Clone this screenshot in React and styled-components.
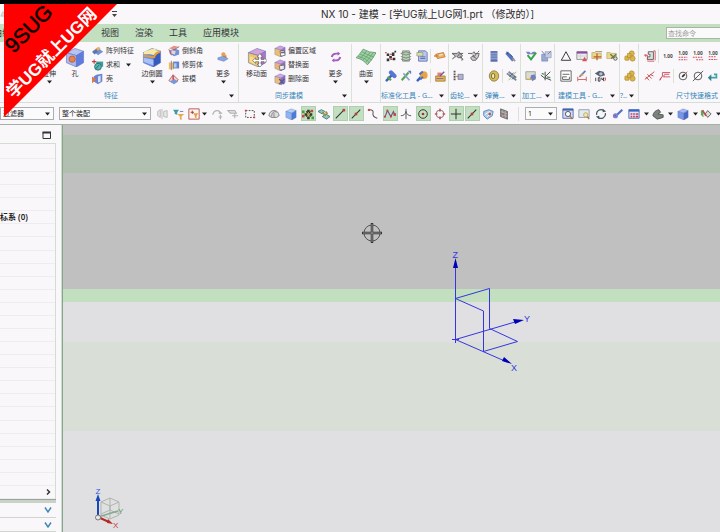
import React from "react";
import styled, { createGlobalStyle } from "styled-components";

const GlobalStyle = createGlobalStyle`
  * { box-sizing: border-box; }
  body { margin: 0; overflow: hidden; }
  button, input, select {
    margin: 0; padding: 0; border: 0; border-radius: 0; background: none;
    font: inherit; color: inherit; letter-spacing: normal;
  }
`;

/* ---------- layout ---------- */

const Window = styled.div`
  position: relative;
  display: flex;
  flex-direction: column;
  height: 100vh;
  overflow: hidden;
  background: #f9f7fa;
  color: #333436;
  font: 7px/12px "Noto Sans", "Noto Sans CJK SC", sans-serif;
  white-space: nowrap;
`;

const TitleBar = styled.header`
  display: flex;
  align-items: center;
  flex: none;
  height: 24px;
  border-top: 4px solid #000;
`;

const QuickAccess = styled.div`
  display: flex;
  align-items: center;
  justify-content: space-between;
  flex: none;
  width: 118px;
`;

const Title = styled.h1`
  flex: 1;
  margin: 0;
  padding-left: 203px;
  font-family: Inter, "Noto Sans CJK SC", sans-serif;
  font-size: 10px;
  line-height: 20px;
  font-weight: 400;
  color: #2b2b2b;
`;

const MenuBar = styled.nav`
  display: flex;
  align-items: center;
  gap: 16px;
  flex: none;
  height: 18px;
  background: #c2dfc0;
  font-size: 9px;
  line-height: 18px;
  overflow: hidden;
`;

const MenuTab = styled.button`
  flex: none;
  &:first-child { margin: 0 74px 0 -7px; }
`;

const Search = styled.input`
  width: 54px;
  height: 12px;
  margin-left: auto;
  padding-left: 1px;
  flex: none;
  border: 1px solid #a9b5a9;
  border-right: 0;
  background: #fafafa;
  font-size: 7px;
  line-height: 10px;
  &::placeholder { color: #9a9a9a; opacity: 1; }
`;

const Ribbon = styled.div`
  display: flex;
  flex: none;
  height: 61px;
  border-bottom: 1px solid #d5ddd5;
  overflow: hidden;
`;

const Group = styled.section`
  display: flex;
  flex-direction: column;
  flex: ${(p) => (p.$w ? "none" : "1")};
  width: ${(p) => (p.$w ? p.$w + "px" : "auto")};
  margin-top: 2px;
  border-right: 1px solid ${(p) => (p.$w ? "#d6e3d6" : "transparent")};
  overflow: hidden;
`;

const GroupBody = styled.div`
  display: flex;
  flex: 1;
  padding-left: ${(p) => p.$indent || 0}px;
`;

const GroupLabel = styled.h2`
  display: flex;
  align-items: center;
  justify-content: space-between;
  height: 12px;
  margin: 0;
  padding: 0 4px 0 ${(p) => p.$indent || 0}px;
  font-size: 7px;
  font-weight: 400;
  color: #3486b8;
`;

const BigButton = styled.button`
  display: flex;
  flex-direction: column;
  align-items: center;
  flex: none;
  width: ${(p) => p.$w}px;
  padding-top: 2px;
`;

const BigIcon = styled.span`
  display: grid;
  place-items: center;
  height: 22px;
`;

const List = styled.div`
  display: flex;
  flex-direction: column;
  flex: none;
  width: ${(p) => p.$w}px;
  padding-left: ${(p) => p.$indent || 0}px;
`;

const ListButton = styled.button`
  display: flex;
  align-items: center;
  gap: 2px;
  height: 14px;
  & > svg:last-child:not(:first-child) { margin-left: 4px; }
`;

const Rows = styled.div`
  display: flex;
  flex-direction: column;
  padding-top: 2px;
`;

const IconRow = styled.div`
  display: flex;
  align-items: center;
  height: 20px;
`;

const Tool = styled.button`
  display: grid;
  place-items: center;
  flex: none;
  width: ${(p) => p.$w || 15}px;
  height: 14px;
`;

const Rule = styled.span`
  flex: none;
  width: 1px;
  height: 14px;
  margin: 0 ${(p) => p.$gap || 1}px;
  background: #d9e1d9;
`;

const SelectionBar = styled.div`
  display: flex;
  align-items: center;
  flex: none;
  height: 22px;
  border-bottom: 1px solid #a4b2a6;
  overflow: hidden;
`;

const ComboFrame = styled.label`
  display: flex;
  align-items: center;
  flex: none;
  width: ${(p) => p.$w}px;
  height: 13px;
  margin-right: ${(p) => p.$gap || 3}px;
  padding-right: 3px;
  border: 1px solid #a9aeb0;
  background: #fcfbfc;
`;

const Combo = styled.select`
  appearance: none;
  flex: 1;
  min-width: 0;
  height: 11px;
  padding-left: 2px;
  line-height: 11px;
  color: #222;
`;

const Cell = styled.button`
  display: grid;
  place-items: center;
  flex: none;
  width: ${(p) => p.$w}px;
  height: 15px;
`;

const Pressed = styled.span`
  display: grid;
  place-items: center;
  width: 15px;
  height: 15px;
  border: 1px solid #b0ceb2;
  background: #c2dfc0;
`;

const Workspace = styled.main`
  display: flex;
  flex: 1;
  min-height: 0;
`;

const Navigator = styled.aside`
  display: flex;
  flex-direction: column;
  flex: none;
  width: 63px;
  border-right: 1px solid #87a58b;
  box-shadow: inset -1px 0 #cddccf;
`;

const NavHeader = styled.div`
  display: flex;
  align-items: center;
  justify-content: flex-end;
  height: 18px;
  padding: 2px 10px 0 0;
`;

const Tree = styled.ul`
  display: flex;
  flex-direction: column;
  flex: 1;
  width: 56px;
  margin: 0;
  padding: 0;
  list-style: none;
  border: solid #d3ded3;
  border-width: 1px 1px 0 0;
`;

const TreeRow = styled.li`
  display: flex;
  align-items: center;
  justify-content: ${(p) => (p.$end ? "flex-end" : "flex-start")};
  flex: 1;
  min-height: 0;
  padding-right: 3px;
  border-bottom: 1px solid #eeecf0;
  font-weight: 600;
  font-size: 8px;
  color: #222;
  &:first-child { flex: 0 0 15px; }
`;

const Splitter = styled.div`
  width: 56px;
  height: 4px;
  border-top: 1px solid #98a598;
  background: #c8d2c8;
`;

const Section = styled.button`
  display: flex;
  align-items: center;
  justify-content: flex-end;
  width: 56px;
  height: ${(p) => p.$h}px;
  padding-right: 4px;
  border-bottom: 1px solid #cfd6d0;
`;

const Viewport = styled.section`
  position: relative;
  flex: 1;
  background: linear-gradient(
    #c0c0c0 10px, #b0bfb0 10px 48px, #c0c0c0 48px 164px, #c2dfc0 164px 177px,
    #e0e0e2 177px 217px, #d9dfd7 217px 306px, #e0e0e2 306px
  );
`;

const Cursor = styled.svg`
  position: absolute;
  left: 298px;
  top: 97px;
`;

const Datum = styled.svg`
  position: absolute;
  left: 382px;
  top: 122px;
`;

const Triad = styled.svg`
  position: absolute;
  left: 27px;
  bottom: 0;
`;

const Ribbon45 = styled.svg`
  position: absolute;
  left: 4px;
  top: 4px;
  pointer-events: none;
`;

/* ---------- icons ---------- */

const cube = (top, left, right) => (
  <g stroke="#5a6fb5" strokeWidth=".4">
    <path d="M1 4 7 1l6 2-5 3z" fill={top} />
    <path d="M1 4l7 2v8l-7-3z" fill={left} />
    <path d="M8 6l5-3v8l-5 3z" fill={right} />
  </g>
);

const dims = (a) => (
  <>
    <text x="7" y="6" fontSize="5.5" fontWeight="700" textAnchor="middle" fill="#444">1.00</text>
    {a && <path d={a} stroke="#d04a5c" fill="none" strokeWidth="1.2" strokeDasharray="2 1" />}
  </>
);

const wrench = (x) => (
  <path d={x || "M2 12 8 6M7 3l4 4"} stroke="#3c62c4" strokeWidth="3" strokeLinecap="round" fill="none" />
);

const folder = <path d="M1 3h4l1 1h6v6H1z" fill="#e9d88a" stroke="#a59443" strokeWidth=".6" />;

const art = {
  hole: <>{cube("#b7c3f3", "#aab8f2", "#5f7be0")}<circle cx="5" cy="8.5" r="2.2" fill="#e58352" stroke="#c4592d" strokeWidth=".6" /></>,
  fillet: (
    <>
      {cube("#f5e7a4", "#6c8fe6", "#345bbd")}
      <path d="M1 5Q1 3 4 2.5l7-1.7Q8 2 8 5z" fill="#f7e8a5" />
      <path d="M1 5.500 8 6.500q.5-3 5-3.800v1.200q-3.500 1-4 4L1 6.800z" fill="#e59a3c" />
      <path d="M1.200 7.500 8 9v4l-6.800-2.600z" fill="#a9c2f5" />
    </>
  ),
  moveFace: (
    <>
      {cube("#d7a2dc", "#f0c56b", "#b274c2")}
      <path d="M2 6.500 6 8v4.500L2 10.500z" fill="#f9dd85" />
      <path d="M9 4.500 11 7h-1.200v1.700H12V7.500l2 2-2 2v-1.200H9.800V12H11l-2 2-2-2h1.200v-1.700H6v1.200l-2-2 2-2v1.200h2.200V7H7z" fill="#fff" stroke="#666" strokeWidth=".5" />
    </>
  ),
  surface: (
    <g stroke="#4f8c5b" strokeWidth=".5" fill="none">
      <path d="M0 7.500Q2 6 5 1.500q4 2.500 9 2.500-2 4-6 8.500Q5 8.500 0 7.500z" fill="#9fcfa5" />
      <path d="M1.500 6.500q5 1 8 4.500M2.700 5q5 1.500 8.500 4.300M4 3.300q4 2.200 8.500 3.700M2.500 8Q5 6.500 7.500 2.700M4.800 9.200Q8 7 10 3.500M6.700 10.700q3-3 5.300-6.800" stroke="#5d9c67" />
    </g>
  ),
  more: <><path d="M7 5h4v4H7z" fill="#e0813e" /><circle cx="7.500" cy="4" r="2.500" fill="#ee9a57" /><path d="M1 8l6-2 6 3-5 3-7-2z" fill="#86a7dc" stroke="#4b71b4" strokeWidth=".5" /></>,
  cycle: (
    <g fill="none" stroke="#a65ac2" strokeWidth="2.200">
      <path d="M2 7Q3 3 7 3h3M12 7q-1 4-5 4H4" />
      <path d="M9 .8 12 3 9 5.500zM5 8.500 2 11l3 2.200z" fill="#a65ac2" stroke="none" />
    </g>
  ),
  pattern: <><path d="M1 7l5-4 4 2-5 4z" fill="#e99550" /><path d="M4 9l5-4 4 3-6 4z" fill="#6f94d6" /><path d="M0 8l5-3 2 3-4 3z" fill="#5377bd" /><path d="M5 4l3-2 2 2-3 2z" fill="#e3b36c" /></>,
  unite: <><path d="M5 3h8v6H5z" fill="#3f9c96" /><circle cx="7" cy="9" r="4" fill="#57b2a9" stroke="#24706d" /><path d="M0 3h5M2.500.5v5" stroke="#c33e44" strokeWidth="1.300" /><path d="M4 12l4-5" stroke="#246b7b" /></>,
  shell: <><path d="M5 2l7-1v9l-5 3-5-3V4z" fill="#6b85d5" /><path d="M7 4l3-1v7l-3 1z" fill="#dde4fb" /><path d="M0 4l5 3.500-5 4.500z" fill="#dd7944" /></>,
  chamfer: <><path d="M2 6 8 4l5 2v5l-6 2-5-3z" fill="#7291dc" /><path d="M1 4l6-3 5 1-6 3z" fill="#e7937e" /><path d="M1 5l3 7M6 6l7-4" stroke="#b04b45" /><path d="M4 6l5 1-1 4-4-1z" fill="#f2d1c4" /></>,
  trim: <><path d="M1 4h6v8H1z" fill="#e9c04f" /><path d="M6 3h7v8H6z" fill="#6483d3" /><path d="M7 5h3v5H7z" fill="#b6c7f5" /><path d="M4 2v11" stroke="#9976ba" /></>,
  draft: <><path d="M1 9l5-7 6 6-5 4z" fill="#f1d2ce" stroke="#be5960" /><path d="M2 10l5-3 5 3-5 3z" fill="#7898d9" /><path d="M6 3v5" stroke="#b9363d" strokeWidth="1.500" /></>,
  offset: <>{cube("#d2a0de", "#eebf69", "#a66abb")}<path d="M7 7h5l1 5-5 1z" fill="#fff" stroke="#555" strokeWidth=".8" /><path d="M8 9h4" stroke="#222" /></>,
  replace: <>{cube("#d49bd8", "#efb374", "#9a6bb9")}<path d="M6 8l6-1v5l-5 1z" fill="#e9eef6" stroke="#555" strokeWidth=".8" /></>,
  remove: <>{cube("#d9a7dd", "#eebd74", "#966abb")}<path d="M6 7l6 6M12 7l-6 6" stroke="#4d5c91" strokeWidth="1.500" /></>,
  checker: <><path d="M2 4h3v3H2zM5 7h3v3H5zM8 3h3v4H8zM2 10h3v3H2zM9 9h3v3H9zM11 1h2v2h-2z" fill="#333" /><path d="M0 3h2M6 5h2M6 11h3" stroke="#cf5a45" strokeWidth="1.500" /></>,
  layers: <><path d="M3 1h8v12H3z" fill="#c4cfbf" stroke="#7e8d80" /><path d="M1 4l6-2 6 2-6 2zM1 7.500l6 2 6-2M1 10.500l6 2 6-2" fill="#b9c7b3" stroke="#6f8673" /></>,
  sheet: <><path d="M3 1h8l2 2v10H3z" fill="#bcc7ea" stroke="#6073b2" /><path d="M1 3h7v4H1z" fill="#d6dfa8" stroke="#7c8564" strokeWidth=".6" /><path d="M5 8h6M5 10h6" stroke="#5065ad" /></>,
  tag: <><path d="M2 5l9-2 2 5-9 2z" fill="#eeb268" stroke="#be7a2b" /><path d="M0 7h5" stroke="#d07320" strokeWidth="1.500" /><path d="M6 6l4-.7" stroke="#fff" /></>,
  wrenchA: <>{wrench()}<path d="M3 8l4 4" stroke="#5ba34d" strokeWidth="2.500" /><path d="M7 3l4 4" stroke="#5577d2" strokeWidth="5" strokeLinecap="round" /></>,
  wrenchB: <><path d="M2 12 10 3" stroke="#57a44b" strokeWidth="2.500" /><path d="M4 4l7 8" stroke="#8ca1da" strokeWidth="2" /><path d="M9 1h4v4z" fill="#5877c4" /></>,
  wrenchC: <>{wrench("M2 12 7 7")}<circle cx="9" cy="6" r="4.500" fill="#eba341" /><path d="M4 5l4-3M5 11l3-3" stroke="#4f79c4" strokeWidth="2.500" /></>,
  stamp: <><path d="M2 7h11v6H2z" fill="#e3b850" stroke="#a77c2c" /><path d="M4 3h5v5H4z" fill="#db8179" /><path d="M7 7l5-5" stroke="#71569d" strokeWidth="1.500" /><path d="M3 10h8" stroke="#755dba" /></>,
  gearA: <path d="M0 11l4-4-4-3h6l2-2 1 2h4M6 8l3-4 3 2-1 3-4 0zM9 7l4 4-2 1" fill="#bbb" stroke="#585858" />,
  gearB: <path d="M0 4h5l2-2 1 2h5l-1 4-3 4H5L3 9l4-3M5 7l5 3M10 4l-3 4M11 3l2-2" fill="#ccc" stroke="#585858" />,
  gearC: <><path d="M3 1v12" stroke="#555" strokeWidth="2.200" strokeDasharray="2 1" /><path d="M7 5h6v6H7z" fill="#aab4dd" stroke="#666" strokeWidth=".7" /><path d="M4 7.500h4" stroke="#d86b47" /></>,
  spring: <><path d="M3 2h8v11H3z" fill="#6e80ba" /><path d="M3 4h8M3 7h8M3 10h8" stroke="#aab7e4" strokeWidth=".7" /><path d="M3 2h8M3 13h8" stroke="#3d4c87" /></>,
  pen: <><path d="M3 3l8 9" stroke="#5675be" strokeWidth="4" /><path d="M3 2l2 3M7 5l3 3" stroke="#27396c" /><path d="M10 10l3 3" stroke="#999" strokeWidth="2" /></>,
  coil: <><ellipse cx="7" cy="7" rx="5.500" ry="6" fill="#d6bd58" stroke="#867d45" /><ellipse cx="6" cy="7" rx="2" ry="3" fill="#f4eab7" stroke="#665e2d" /></>,
  coil2: <><path d="M1 4l11 8M3 2l9 7" stroke="#77859b" strokeWidth="2" /><path d="M12 2 3 12" stroke="#85b18b" /><path d="M4 8l5-5M7 11l4-4" stroke="#555" /></>,
  check: <><path d="M1 2h4l2 2 2-2h3v3H3z" fill="#7a84c3" /><path d="M3 6l4 5 6-8" stroke="#36a449" strokeWidth="2.200" fill="none" /></>,
  blocks: <><path d="M2 5h7v8H2z" fill="#94abd9" stroke="#6276a8" strokeWidth=".6" /><path d="M6 2h7v7H6z" fill="#c3cce1" stroke="#7985a0" strokeWidth=".6" /><path d="M2 1l4 5M9 5l4-4" stroke="#7a6da5" /></>,
  board: <><path d="M1 2h11v9H1z" fill="#d9ddd2" stroke="#9a9e92" /><path d="M7 6l4-1 2 4-4 4-3-3z" fill="#7180c5" /><path d="M2 11h6" stroke="#dba63c" strokeWidth="1.500" /></>,
  axes: <><path d="M6 12V2M6 9l7 3M6 8l6-6M1 6l5 4" stroke="#444" strokeWidth="1.100" fill="none" /><path d="M2 4l3 1M8 8l4 1" stroke="#569a62" strokeWidth="1.600" /></>,
  triangle: <path d="M7 2l5.500 10h-11z" fill="none" stroke="#333" strokeWidth="1.100" />,
  table: <><path d="M1 2h12v9H1z" fill="#eee" stroke="#888" /><path d="M1 3h12" stroke="#8b4ca1" strokeWidth="2.500" /><path d="M1 7h12M5 4v7" stroke="#ccc" /><path d="M10 8l3 5H7z" fill="#d7545d" /></>,
  folderA: <>{folder}<path d="M7 4v8M3 8h9" stroke="#c35b37" strokeWidth="1.500" /><path d="M5 2h8" stroke="#8b7c35" /></>,
  folderB: <>{folder}<path d="M5 5l7 6M12 5l-6 5" stroke="#637948" strokeWidth="1.500" /><circle cx="11" cy="10" r="2" fill="#ddd" stroke="#555" /></>,
  form: <><path d="M1 1h12v12H1z" fill="#fff" stroke="#555" /><path d="M3 5h8M3 8h5M3 8v3h8V8" stroke="#555" fill="none" /></>,
  dimA: <><path d="M2 8v5M12 8v5M2 11h10" stroke="#d36c71" strokeWidth="1.200" /><path d="M4 8l7-7" stroke="#6b7cae" strokeWidth="2" /><path d="M4 8l3-4 2 2z" fill="#dfa053" /></>,
  scan: <><path d="M1 4l5-3 5 1 2 4-6 2z" fill="#566272" /><circle cx="8" cy="4.500" r="2" fill="#b0c0d2" /><path d="M2 9v4M5 9h2v4H5zM9 9v2h2v-2 4" stroke="#333" /><path d="M12 9.500h2l-1.500 3.500" stroke="#d03d43" /></>,
  gold: <g fill="#ddb547" stroke="#a6852f" strokeWidth=".7"><circle cx="9" cy="4" r="3" /><rect x="1" y="7" width="5" height="5" rx="1" /><circle cx="10" cy="10" r="3" /><path d="M4 4h4v5H4z" /></g>,
  hline: <><path d="M5 2h6v9H4V8h3V5H5z" fill="#ddd" stroke="#555" /><path d="M0 6h4v6M2 5v3M11 1h2v11M4 13h8" stroke="#c5504f" fill="none" /></>,
  d1: <text x="7" y="9" fontSize="5.500" fontWeight="700" textAnchor="middle" fill="#444">1.00</text>,
  d2: dims("M2 8.500h10M2 11.500h10"),
  d3: dims("M1 8.500h11M5 11.500h8"),
  d4: dims("M2 8h9M2 11h10"),
  slope: <path d="M1 11 12 2M4 5l5 5M2 8l4 4M7 5l4 2" stroke="#c74a4c" strokeWidth="1.100" />,
  leader: <path d="M1 12l3-5h3M1 12l1-3M4 7V3h9M6 5h6M5 8h8" stroke="#cf5360" strokeWidth="1.100" fill="none" />,
  diaA: <><circle cx="7" cy="7" r="4.500" fill="none" stroke="#444" /><path d="M6 8l6-6" stroke="#c4523d" /><path d="M6 8l3-3" stroke="#333" strokeWidth="2" /></>,
  diaB: <><circle cx="7" cy="7" r="4.500" fill="none" stroke="#444" /><path d="M1 13 13 1" stroke="#444" /></>,
  arrowBack: <><path d="M4 9h7V5H8" stroke="#43a3ad" strokeWidth="2" /><path d="M5 5v8L1 9z" fill="#318690" /></>,
  ghostA: <path d="M2 4l3-2v9l-3-2zM7 1v12M9 4l4-1v8l-4-1z" fill="#e7e7e7" stroke="#b5b5b5" />,
  filter: <><path d="M0 2h7L5 5v3L2 7V5z" fill="#3d9da2" /><path d="M5 7h8l-3 3v4l-2-1v-3z" fill="#e4aa4e" /><path d="M8 4h4" stroke="#6c6cb2" /></>,
  addFilter: <><path d="M1 1h12v12H1z" fill="#fff5ec" stroke="#b5484b" /><path d="M3 5h4M5 3v4" stroke="#8c3439" /><path d="M6 6h6l-2 3v3l-2-1V9z" fill="#dca249" /></>,
  ghostB: <path d="M2 8Q3 3 7 3t4 4M9 6h4M11 8v5M9 10.500h4" fill="none" stroke="#b1b6b1" strokeWidth="1.400" />,
  ghostC: <path d="M1 3h8l2 3H4zM9 6v6M6 9h7" fill="#ddd" stroke="#b1b1b1" strokeWidth="1.200" />,
  marquee: <><path d="M2 3h10v8H2z" fill="none" stroke="#333" strokeDasharray="2 1.500" /><path d="M1 2h2v2H1zM11 10h2v2h-2z" fill="#c94a4a" /></>,
  dome: <><path d="M1 9q1-6 6-6t6 6l-3 2-6 0z" fill="#d9dee1" stroke="#777" /><path d="M4 10q0-5 4-6l2 1M7 11V6" stroke="#8d7c7c" fill="none" /></>,
  blueCube: cube("#b3d1f7", "#8eb5f0", "#4a7ddb"),
  snapAll: (
    <>
      <path d="M5 4l5 6M5 10l5-6" stroke="#222" strokeWidth="1.200" />
      <path d="M6 2h3v3H6zM3 6h3v3H3zM9 6h3v3H9zM6 10h3v3H6z" fill="#2c3b2c" />
      <path d="M0 3h3v3H0zM11 10h3v3h-3z" fill="#4d9939" />
      <path d="M0 8h3v3H0zM10 2h3v3h-3z" fill="#c14b43" />
      <path d="M6 6h3v3H6z" fill="#d1a63a" />
    </>
  ),
  snapPts: <><path d="M0 4l4-2 4 2-3 3zM5 10l4-3 5 3-4 3z" fill="#95c3bf" stroke="#3c7b72" /><path d="M5 5l4 4M9 4l2 3" stroke="#9d9040" strokeWidth="2" /></>,
  lineEnd: <><path d="M2 12 12 2" stroke="#333" strokeWidth="1.200" /><path d="M10 1h3v3h-3z" fill="#b83f3f" /></>,
  lineMid: <><path d="M2 12 12 2" stroke="#333" strokeWidth="1.200" /><path d="M5.500 5.500h3v3h-3z" fill="#b83f3f" /></>,
  curve: <><path d="M3 2q5 0 4 4t5 6" fill="none" stroke="#555" strokeWidth="1.200" /><path d="M1 1h2.500v2.500H1z" fill="#c34d4d" /></>,
  zigzag: <><path d="M1 11 4 3l4 7 3-6 2 5" fill="none" stroke="#70498a" strokeWidth="1.200" /><path d="M3 2h2v2H3zM7 9h2v2H7zM0 9h2v2H0zM11 6h3v3h-3z" fill="#c53d43" /></>,
  cross: <path d="M7 1v12M1 9q5 0 6-5 1 5 6 5" fill="none" stroke="#555" strokeWidth="1.100" />,
  target: <><circle cx="7" cy="7" r="5" fill="none" stroke="#222" /><circle cx="7" cy="7" r="1.600" fill="#a33" /></>,
  quad: <><circle cx="7" cy="7" r="4.500" fill="none" stroke="#666" /><path d="M6 1h2v3H6zM6 10h2v3H6zM1 6h3v2H1zM10 6h3v2h-3z" fill="#cf5353" /></>,
  plus: <path d="M7 1v12M1 7h12" stroke="#333" strokeWidth="1.200" />,
  globe: <><path d="M2 4l6-2 5 2-1 5-6 4-4-4z" fill="#a9cbe9" stroke="#5481b5" /><path d="M3 8l6-4M6 10l5-4" stroke="#fff" /><circle cx="9" cy="7" r="1.500" fill="#c74747" /></>,
  grid: <><path d="M3 1l8 3v9l-8-3z" fill="#888" stroke="#666" /><path d="M3 4l8 3M3 7l8 3M5.500 2v9M8.500 3v9" stroke="#ccc" strokeWidth=".6" /><path d="M4 7h3" stroke="#b45353" strokeWidth="1.500" /></>,
  fit: <><path d="M1 1h12v11H1z" fill="#d4dbf1" stroke="#5068a9" /><path d="M1 2h12" stroke="#4062af" strokeWidth="2" /><circle cx="7" cy="7" r="3" fill="#f7faff" stroke="#445" /><path d="M9 9l3 4" stroke="#b46c3d" strokeWidth="1.500" /></>,
  zoomWin: <><path d="M1 2h12v9H1z" fill="#e3eaf1" stroke="#8799aa" /><circle cx="9" cy="8" r="2.500" fill="#f6e6a0" stroke="#bda35a" /><path d="M11 10l2 3" stroke="#a97548" strokeWidth="1.500" /></>,
  rotate: <><path d="M2 8A5 5 0 0 1 10 3M12 6a5 5 0 0 1-8 5" fill="none" stroke="#415c69" strokeWidth="1.500" /><path d="M9 1l4 3-4 1zM5 13 1 10l4-1z" fill="#415c69" /></>,
  brush: <><path d="M6 8l6-6" stroke="#5272c5" strokeWidth="2.500" /><circle cx="4" cy="9" r="3" fill="#6f89da" /><circle cx="4" cy="9" r="1" fill="#c94d4d" /></>,
  windows: <><path d="M1 2h12v10H1z" fill="#dfe5fa" stroke="#4266b3" /><path d="M1 3h12" stroke="#3866c2" strokeWidth="2.500" /><path d="M3 6h2v2H3zM6 6h2v2H6zM9 6h3v2H9zM3 9h2v2H3zM6 9h2v2H6zM9 9h3v2H9z" fill="#c9424d" /></>,
  shade: <path d="M1 9q1-6 7-7l2 3-3 2 6 1v3l-7 2z" fill="#7b827e" stroke="#4a4f4c" />,
  viewCube: cube("#a9baf2", "#7896e3", "#4868c6"),
  clip: <><path d="M4 2v9L1 8V3z" fill="#57ae63" /><path d="M9 3l4 4-4 4-3-4z" fill="#ddd" stroke="#555" /><path d="M3 3l4 6" stroke="#c84a4a" strokeWidth="2" /></>,
  save: <path d="M1 10l3-6 4 2-2 4zM7 3h5" fill="#ddd" stroke="#bbb" />,
};

const Icon = ({ name, size = 12 }) => (
  <svg width={size} height={size} viewBox="0 0 14 14" fill="none" aria-hidden="true">{art[name]}</svg>
);

const Caret = () => (
  <svg width="5" height="4" viewBox="0 0 5 4" aria-hidden="true"><path d="M0 .5h5L2.500 3.500z" fill="#222" /></svg>
);

const Chevron = ({ right }) => (
  <svg width="8" height="8" viewBox="0 0 8 8" fill="none" aria-hidden="true">
    {right
      ? <path d="M3 1.500 5.500 4 3 6.500" stroke="#333" strokeWidth="1.500" />
      : <path d="M1 1.500 4 6l3-4.500" stroke="#3f86b8" strokeWidth="1.500" />}
  </svg>
);

/* ---------- composed parts ---------- */

const Big = ({ icon, label, w, size = 20, menu = true }) => (
  <BigButton type="button" $w={w}>
    <BigIcon>{icon && <Icon name={icon} size={size} />}</BigIcon>
    {label}
    {menu && <Caret />}
  </BigButton>
);

const Items = ({ w, indent, items }) => (
  <List $w={w} $indent={indent}>
    {items.map(([icon, label, menu]) => (
      <ListButton type="button" key={label}>
        <Icon name={icon} />{label}{menu && <Caret />}
      </ListButton>
    ))}
  </List>
);

/* In a row "|" draws a divider; "name:22" sets a wider tool. */
const ToolGroup = ({ w, label, rows, indent = 2, labelIndent = 0, menu = true, rule }) => (
  <Group $w={w}>
    <GroupBody $indent={indent}>
      <Rows>
        {rows.map((row, r) => (
          <IconRow key={r}>
            {row.split(" ").map((n, i) => {
              if (n === "|") return <Rule key={i} $gap={rule} />;
              const [name, width] = n.split(":");
              return (
                <Tool key={i} type="button" aria-label={name} $w={width}>
                  <Icon name={name} />
                </Tool>
              );
            })}
          </IconRow>
        ))}
      </Rows>
    </GroupBody>
    <GroupLabel $indent={labelIndent}>{label}{menu && <Caret />}</GroupLabel>
  </Group>
);

const Select = ({ w, gap, name, value }) => (
  <ComboFrame $w={w} $gap={gap}>
    <Combo aria-label={name} defaultValue={value}><option>{value}</option></Combo>
    <Caret />
  </ComboFrame>
);

/* [icon, cell width, pressed] */
const selectTools = [
  ["ghostA", 16], ["filter", 18], ["addFilter", 12], ["caret", 8], ["ghostB", 18], ["ghostC", 14],
  ["marquee", 20], ["caret", 6], ["dome", 16], ["blueCube", 18], ["snapAll", 16, 1], ["snapPts", 16],
  ["lineEnd", 16, 1], ["lineMid", 16, 1], ["curve", 18], ["zigzag", 16, 1], ["cross", 16],
  ["target", 18, 1], ["quad", 16], ["plus", 16, 1], ["lineMid", 16, 1], ["globe", 16], ["grid", 16],
];
const viewTools = [
  ["fit", 16], ["zoomWin", 16], ["rotate", 18], ["brush", 16], ["windows", 16], ["caret", 8],
  ["shade", 16], ["caret", 8], ["viewCube", 18], ["caret", 6], ["clip", 16], ["caret", 8],
];

const Cells = ({ items }) =>
  items.map(([icon, w, on], i) => (
    <Cell key={i} type="button" $w={w} aria-label={icon} aria-pressed={on ? true : undefined}>
      {icon === "caret" ? <Caret /> : on ? <Pressed><Icon name={icon} /></Pressed> : <Icon name={icon} />}
    </Cell>
  ));

const DatumAxes = () => (
  <Datum width="90" height="130" viewBox="0 0 90 130" fill="none" stroke="#3535e0" aria-label="基准坐标系">
    <path d="M10.500 92V20M7 92.500h7M10.500 89v7M10.500 92.500 62 115M10.500 92.500 70 75M10.500 51.500 44.500 41.500V81.500L72.500 94.500 38.500 104.500V64L10.500 51.500" />
    <path d="M8 21h5l-2.500-10zM68 72l2 5 9-4zM57 114l2-4 8 7z" fill="#0000b8" stroke="none" />
    <g fill="#3535e0" stroke="none" fontFamily="Liberation Sans, sans-serif" fontSize="9">
      <text x="7.500" y="11">Z</text><text x="79" y="75">Y</text><text x="66" y="124">X</text>
    </g>
  </Datum>
);

const ViewTriad = () => (
  <Triad width="40" height="46" viewBox="0 0 40 46" fill="none" aria-label="视图三重轴">
    <path d="M11 16l9-4 9 4v13l-9 4-9-4zM11 16l9 4 9-4M20 20v13M20 12v12l-9 4M20 24l9 4" stroke="#b0b5ae" />
    <path d="M8 31 28 25" stroke="#84aa90" strokeWidth="1.500" />
    <path d="M8 31V14" stroke="#1747b8" strokeWidth="2" />
    <path d="M5.500 15h5L8 8z" fill="#1747b8" />
    <path d="M8 31l11 5" stroke="#b42929" strokeWidth="2" />
    <path d="M18 33l-1 4 6 1z" fill="#b42929" />
    <circle cx="8" cy="31.500" r="2.500" fill="#e8e8e8" stroke="#777" />
    <g fontFamily="Liberation Sans, sans-serif" fontSize="8">
      <text x="5.500" y="8" fill="#2b5be0">Z</text><text x="28" y="28" fill="#4b9a5d">Y</text><text x="23" y="42" fill="#c93636">X</text>
    </g>
  </Triad>
);

export default function App() {
  return (
    <Window>
      <GlobalStyle />
      <TitleBar>
        <QuickAccess>
          <Icon name="save" size={10} />
          <svg width="7" height="7" viewBox="0 0 7 7" aria-hidden="true"><path d="M1 0h5v1H1zM1 3h5L3.500 6z" fill="#444" /></svg>
        </QuickAccess>
        <Title>NX 10 - 建模 - [学UG就上UG网1.prt （修改的）]</Title>
      </TitleBar>

      <MenuBar>
        <MenuTab type="button">曲线</MenuTab>
        <MenuTab type="button">视图</MenuTab>
        <MenuTab type="button">渲染</MenuTab>
        <MenuTab type="button">工具</MenuTab>
        <MenuTab type="button">应用模块</MenuTab>
        <Search type="search" placeholder="查找命令" aria-label="查找命令" />
      </MenuBar>

      <Ribbon>
        <Group $w={239}>
          <GroupBody $indent={36}>
            <Big label="拉伸" w={26} />
            <Big icon="hole" label="孔" w={26} menu={false} />
            <Items w={49} indent={4} items={[["pattern", "阵列特征"], ["unite", "求和", true], ["shell", "壳"]]} />
            <Big icon="fillet" label="边倒圆" w={30} />
            <Items w={41} indent={1} items={[["chamfer", "倒斜角"], ["trim", "修剪体"], ["draft", "拔模"]]} />
            <Big icon="more" label="更多" w={30} size={12} />
          </GroupBody>
          <GroupLabel $indent={104}>特征<Caret /></GroupLabel>
        </Group>

        <Group $w={113}>
          <GroupBody>
            <Big icon="moveFace" label="移动面" w={35} menu={false} />
            <Items w={46} items={[["offset", "偏置区域"], ["replace", "替换面"], ["remove", "删除面"]]} />
            <Big icon="cycle" label="更多" w={31} size={12} />
          </GroupBody>
          <GroupLabel $indent={36}>同步建模<Caret /></GroupLabel>
        </Group>

        <Group $w={29}>
          <GroupBody><Big icon="surface" label="曲面" w={28} /></GroupBody>
          <GroupLabel />
        </Group>

        <ToolGroup w={68} label="标准化工具 - G..." rows={["checker layers:16 sheet | tag", "wrenchA wrenchB:16 wrenchC | stamp"]} />
        <ToolGroup w={34} label="齿轮..." indent={1} labelIndent={1} rows={["gearA:16 gearB:16", "gearC:16"]} />
        <ToolGroup w={38} label="弹簧..." indent={3} labelIndent={2} rows={["spring:16 pen:16", "coil | coil2"]} />
        <ToolGroup w={34} label="加工..." labelIndent={1} rows={["check blocks", "board axes"]} />
        <ToolGroup w={65} label="建模工具 - G..." indent={3} labelIndent={3} rows={["triangle:16 table folderA folderB:16", "form:16 dimA | scan:16"]} />
        <ToolGroup w={19} label="?.." rows={["gold:16", "gold:16"]} />
        <ToolGroup label="尺寸快速格式" indent={3} labelIndent={37} menu={false} rows={["hline | d1 d2 d3 d4:16", "slope leader | diaA diaB arrowBack"]} />
      </Ribbon>

      <SelectionBar>
        <Select w={54} gap={5} name="选择过滤器" value="过滤器" />
        <Select w={92} gap={3} name="选择范围" value="整个装配" />
        <Cells items={selectTools} />
        <Rule $gap={6} />
        <Select w={32} gap={3} name="图层" value="1" />
        <Cells items={viewTools} />
      </SelectionBar>

      <Workspace>
        <Navigator>
          <NavHeader>
            <svg width="10" height="9" viewBox="0 0 10 9" fill="none" aria-hidden="true">
              <path d="M1 1.500h7.500v6H1z" stroke="#333" /><path d="M.5 1.500h8.500" stroke="#333" strokeWidth="2" />
            </svg>
          </NavHeader>
          <Tree>
            {Array.from({ length: 27 }, (_, i) => (
              <TreeRow key={i} $end={i === 26}>
                {i === 5 && "标系 (0)"}
                {i === 26 && <Chevron right />}
              </TreeRow>
            ))}
          </Tree>
          <Splitter />
          <Section type="button" aria-label="相关性" $h={15}><Chevron /></Section>
          <Section type="button" aria-label="细节" $h={14}><Chevron /></Section>
        </Navigator>

        <Viewport>
          <Cursor width="22" height="22" viewBox="0 0 22 22" fill="none">
            <circle cx="11" cy="11" r="8" stroke="#555" />
            <path d="M11 1v20M1 11h20" stroke="#333" strokeWidth="2.500" />
            <path d="M11 2v18M2 11h18" stroke="#aaa" strokeWidth=".8" />
          </Cursor>
          <DatumAxes />
          <ViewTriad />
        </Viewport>
      </Workspace>

      <Ribbon45 width="113" height="113" viewBox="0 0 113 113">
        <path d="M0 0h113L0 113z" fill="#f00" />
        <g transform="rotate(-45)" textAnchor="middle" fontFamily="Liberation Sans, Noto Sans CJK SC, sans-serif">
          <text x="0" y="42" fontSize="21" fill="#000" stroke="#000" strokeWidth=".5">9SUG</text>
          <text x="-1" y="74" fontSize="17" fontWeight="700" fill="#fff">学UG就上UG网</text>
        </g>
      </Ribbon45>
    </Window>
  );
}
